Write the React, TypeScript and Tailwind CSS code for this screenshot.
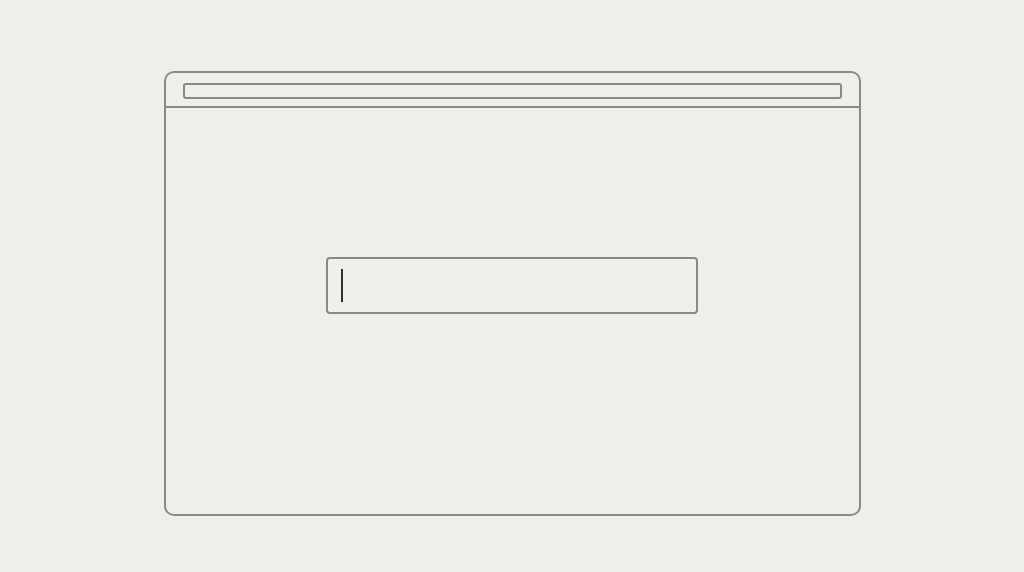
export default function App() {
    return (
        <div className="w-[1024px] h-[572px] bg-[#efeee9] pt-[71px]">
            <div className="mx-auto w-[697px] h-[445px] border-2 border-[#8b8a82] rounded-[10px] flex flex-col">
                <div className="h-[35px] border-b-2 border-[#8b8a82] px-[17px] pt-[10px]">
                    <div className="h-[16px] border-2 border-[#8b8a82] rounded-[3px]"></div>
                </div>
                <div className="flex-1 flex justify-center pt-[149px]">
                    <div className="w-[372px] h-[57px] border-2 border-[#8b8a82] rounded-[4px] bg-[#f0efeb] flex items-center pl-[13px]">
                        <div className="w-[2px] h-[33px] bg-[#2f2f2c]"></div>
                    </div>
                </div>
            </div>
        </div>
    )
}
